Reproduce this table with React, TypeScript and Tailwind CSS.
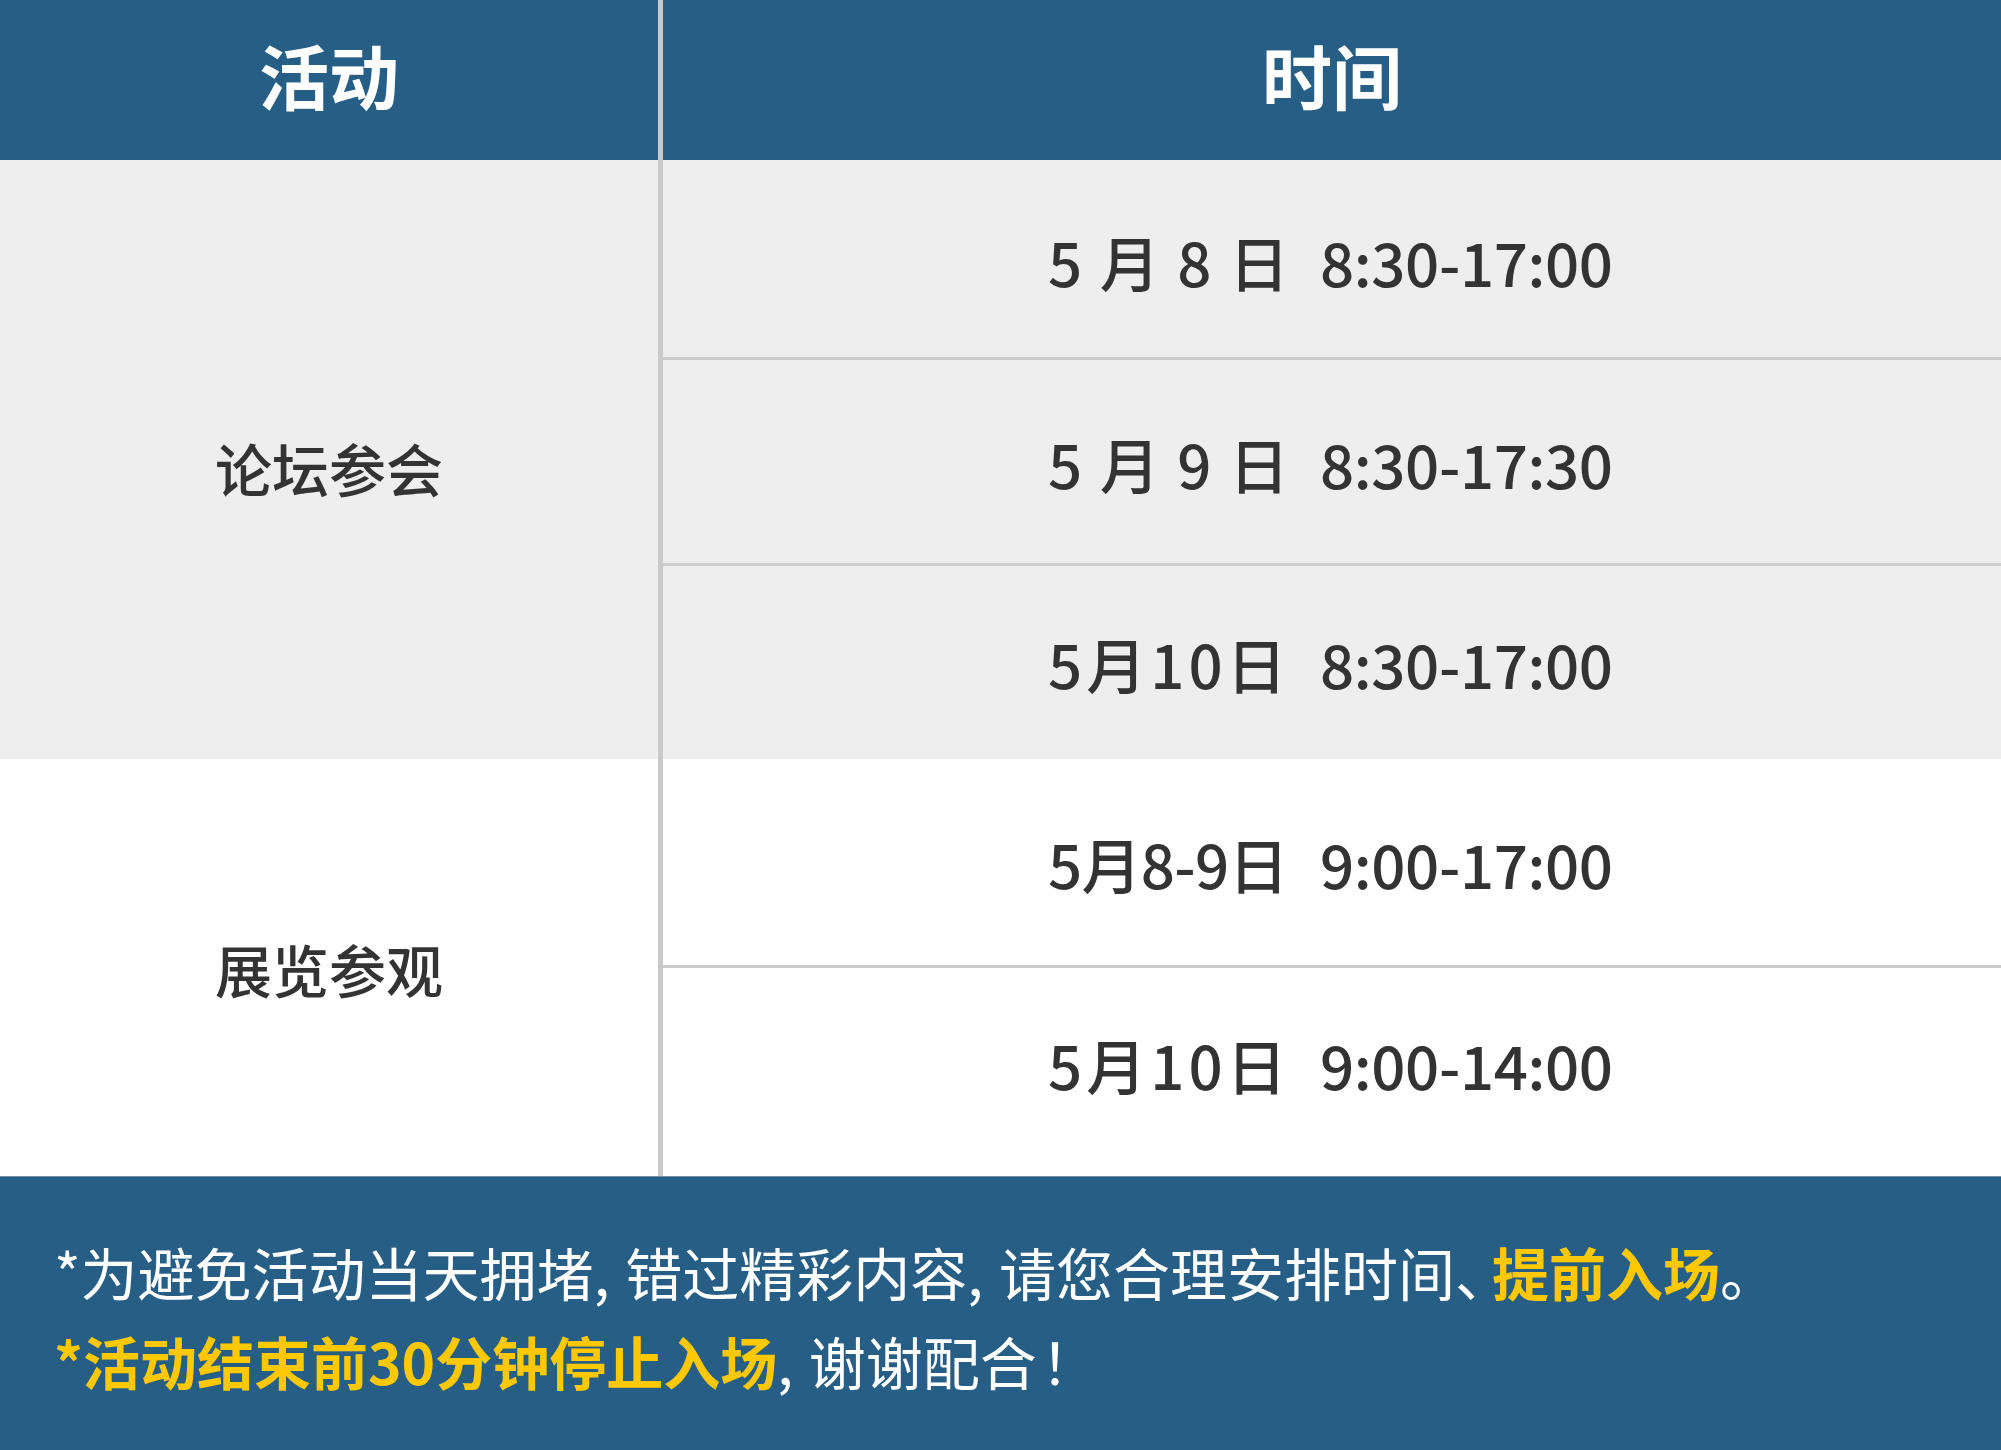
import React from "react";

type Row = {
  date: string;
  dateClass: string;
  time: string;
  rowClass: string;
};

const forumRows: Row[] = [
  { date: "5 月 8 日", dateClass: "tracking-[2px]", time: "8:30-17:00", rowClass: "h-[200px] border-b-[3px] pt-[4px]" },
  { date: "5 月 9 日", dateClass: "tracking-[2px]", time: "8:30-17:30", rowClass: "h-[206px] border-b-[3px] pt-[2px]" },
  { date: "5月10日", dateClass: "tracking-[4px]", time: "8:30-17:00", rowClass: "h-[193px] pt-[0px]" },
];

const expoRows: Row[] = [
  { date: "5月8-9日", dateClass: "tracking-[-0.7px]", time: "9:00-17:00", rowClass: "h-[209px] border-b-[3px] pt-[2px]" },
  { date: "5月10日", dateClass: "tracking-[4px]", time: "9:00-14:00", rowClass: "h-[208px] pb-[17px]" },
];

const TimeRow = ({ row }: { row: Row }) => (
  <div className={`flex items-center border-[#cccccc] pl-[385px] text-[60px] font-medium leading-none text-[#333333] ${row.rowClass}`}>
    <span className={`inline-block w-[272px] whitespace-pre ${row.dateClass}`}>{row.date}</span>
    <span className="tracking-[-0.4px]">{row.time}</span>
  </div>
);

const Group = ({ label, rows, bg, labelClass }: { label: string; rows: Row[]; bg: string; labelClass: string }) => (
  <div className={`flex ${bg}`}>
    <div className={`flex w-[658px] items-center justify-center text-[57px] font-medium leading-none text-[#333333] ${labelClass}`}>
      {label}
    </div>
    <div className="w-[5px] bg-[#c9c9c9]" />
    <div className="flex flex-1 flex-col">
      {rows.map((row, i) => (
        <TimeRow key={i} row={row} />
      ))}
    </div>
  </div>
);

export default function App() {
  return (
    <div className="flex h-[1450px] w-[2001px] flex-col font-['Noto_Sans_CJK_SC','Noto_Sans',sans-serif]">
      {/* header */}
      <div className="flex h-[160px] bg-[#265e86] pb-[10px] text-[70px] font-bold leading-none text-white">
        <div className="flex w-[658px] items-center justify-center">活动</div>
        <div className="-mb-[10px] w-[5px] bg-[#c9c9c9]" />
        <div className="flex flex-1 items-center justify-center">时间</div>
      </div>

      <Group label="论坛参会" rows={forumRows} bg="bg-[#eeeeee]" labelClass="pt-[16px]" />
      <Group label="展览参观" rows={expoRows} bg="bg-white" labelClass="pt-[2px]" />

      {/* footer notice */}
      <div className="flex-1 border-t border-[#6f8fa8] bg-[#265e86] pl-[54px] pt-[50px] text-[57px] leading-[89px] text-white">
        <p className="whitespace-nowrap">
          *为避免活动当天拥堵<span className="mr-[3px]">,</span> 错过精彩内容<span className="mr-[3px]">,</span> 请您合理安排时间<span className="tracking-[-20px]">、</span>
          <span className="font-bold text-[#ffc800]">提前入场</span>。
        </p>
        <p className="whitespace-nowrap">
          <span className="font-bold text-[#ffc800]">*活动结束前30分钟停止入场</span>
          <span className="mr-[3px]">,</span> 谢谢配合<span className="ml-[4px]">！</span>
        </p>
      </div>
    </div>
  );
}
